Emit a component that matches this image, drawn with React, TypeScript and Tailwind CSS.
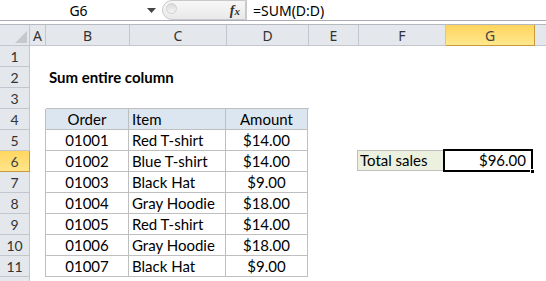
import React from 'react';

// Column widths of the sheet: row header, A..G, then the cut-off H
const cols = [
  { key: 'A', w: 'w-[16px]' },
  { key: 'B', w: 'w-[84px]' },
  { key: 'C', w: 'w-[97px]' },
  { key: 'D', w: 'w-[82px]' },
  { key: 'E', w: 'w-[50px]' },
  { key: 'F', w: 'w-[87px]' },
  { key: 'G', w: 'w-[89px]' },
];

const orders = [
  ['01001', 'Red T-shirt', '$14.00'],
  ['01002', 'Blue T-shirt', '$14.00'],
  ['01003', 'Black Hat', '$9.00'],
  ['01004', 'Gray Hoodie', '$18.00'],
  ['01005', 'Red T-shirt', '$14.00'],
  ['01006', 'Gray Hoodie', '$18.00'],
  ['01007', 'Black Hat', '$9.00'],
];

const font = "font-['Lato','Noto_Sans',sans-serif]";

function RowHeader({ n, active }: { n: number; active?: boolean }) {
  return (
    <div
      className={
        'w-[30px] shrink-0 h-full flex items-center justify-center text-[14px] text-[#333] border-b border-r ' +
        (active
          ? 'bg-gradient-to-b from-[#ffd660] to-[#ffe58a] border-[#c99a3c] text-[#444]'
          : 'bg-[#e4e7ec] border-[#c3c7cd]')
      }
    >
      {n}
    </div>
  );
}

function Cell({
  w,
  className = '',
  children,
}: {
  w: string;
  className?: string;
  children?: React.ReactNode;
}) {
  return <div className={`${w} shrink-0 h-full flex items-center text-[15px] ${className}`}>{children}</div>;
}

function FormulaBar() {
  return (
    <div className="h-[21px] flex border-b border-[#a9adb3] bg-white text-[14px] font-['Noto_Sans',sans-serif] text-black">
      <div className="w-[162px] shrink-0 flex items-center">
        <span className="flex-1 text-center pl-[10px]">G6</span>
        <svg width="9" height="5" viewBox="0 0 9 5" className="mr-[6px]">
          <path d="M0 0 L9 0 L4.5 5 Z" fill="#444" />
        </svg>
      </div>
      <div className="w-[84px] shrink-0 relative flex items-center justify-end rounded-l-full border border-[#c7c9cc] bg-gradient-to-b from-[#f7f7f7] to-[#e9e9e9]">
        <div className="absolute left-[3px] top-[2px] w-[11px] h-[11px] rounded-full bg-gradient-to-b from-[#dcdcdc] to-[#f4f4f4] border border-[#d0d0d0]" />
        <span className="pr-[5px] italic font-bold font-['Liberation_Serif',serif] text-[14px] text-[#333]">
          f<span className="text-[11px]">x</span>
        </span>
      </div>
      <div className="flex-1 flex items-center pl-[6px] border-l border-[#c7c9cc]">=SUM(D:D)</div>
    </div>
  );
}

function ColumnHeaders() {
  return (
    <div className="h-[22px] flex border-t border-[#b5b9bf] text-[14px] text-[#333] font-['Noto_Sans',sans-serif]">
      <div className="w-[30px] shrink-0 h-full bg-[#e4e7ec] border-b border-r border-[#c3c7cd] flex items-end justify-end p-[2px]">
        <svg width="12" height="12" viewBox="0 0 12 12">
          <path d="M12 0 L12 12 L0 12 Z" fill="#c5c9ce" />
        </svg>
      </div>
      {cols.map((c) => (
        <div
          key={c.key}
          className={
            `${c.w} shrink-0 h-full flex items-center justify-center border-b border-r ` +
            (c.key === 'G'
              ? 'bg-gradient-to-b from-[#ffd45c] to-[#ffe88c] border-[#c99a3c] text-[#444]'
              : 'bg-[#e4e7ec] border-[#c3c7cd]')
          }
        >
          {c.key}
        </div>
      ))}
      <div className="flex-1 h-full bg-[#e4e7ec] border-b border-[#c3c7cd]" />
    </div>
  );
}

export default function App() {
  const tb = 'border-[#bfbfbf]';
  return (
    <div className={`w-[546px] h-[281px] bg-white overflow-hidden ${font}`}>
      <FormulaBar />
      <div className="h-[3px] bg-white" />
      <ColumnHeaders />

      {/* row 1 */}
      <div className="h-[21px] flex">
        <RowHeader n={1} />
      </div>
      {/* row 2 */}
      <div className="h-[21px] flex">
        <RowHeader n={2} />
        <Cell w="w-[16px]" />
        <Cell w="w-[200px]" className="pl-[3px] font-bold text-black whitespace-nowrap">
          Sum entire column
        </Cell>
      </div>
      {/* row 3 */}
      <div className="h-[21px] flex">
        <RowHeader n={3} />
        <Cell w="w-[16px]" />
        <Cell w="w-[84px]" className={`border-b ${tb}`} />
        <Cell w="w-[97px]" className={`border-b ${tb}`} />
        <Cell w="w-[82px]" className={`border-b ${tb}`} />
      </div>
      {/* row 4: table header */}
      <div className="h-[21px] flex">
        <RowHeader n={4} />
        <Cell w="w-[16px]" className={`border-r ${tb}`} />
        <Cell w="w-[83px]" className={`justify-center bg-[#dce6f1] border-b border-r ${tb}`}>
          Order
        </Cell>
        <Cell w="w-[97px]" className={`pl-[3px] bg-[#dce6f1] border-b border-r ${tb}`}>
          Item
        </Cell>
        <Cell w="w-[82px]" className={`justify-center bg-[#dce6f1] border-b border-r ${tb}`}>
          Amount
        </Cell>
      </div>
      {orders.map(([id, item, amt], i) => {
        const n = i + 5;
        return (
          <div key={id} className="h-[21px] flex">
            <RowHeader n={n} active={n === 6} />
            <Cell w="w-[16px]" className={`border-r ${tb}`} />
            <Cell w="w-[83px]" className={`justify-center border-b border-r ${tb}`}>
              {id}
            </Cell>
            <Cell w="w-[97px]" className={`pl-[3px] border-b border-r ${tb} whitespace-nowrap`}>
              {item}
            </Cell>
            <Cell w="w-[82px]" className={`justify-center border-b border-r ${tb}`}>
              {amt}
            </Cell>
            {n === 6 && (
              <>
                <Cell w="w-[49px]" />
                <Cell w="w-[87px]" className="pl-[2px] bg-[#ebf1de] border border-[#bfbfbf] -mt-px">
                  Total sales
                </Cell>
                <div className="w-[90px] shrink-0 h-[23px] -mt-[2px] -ml-px relative border-2 border-black flex items-center justify-end pr-[5px] text-[15px] bg-white">
                  $96.00
                  <div className="absolute -right-[4px] -bottom-[4px] w-[5px] h-[5px] bg-black border border-white" />
                </div>
              </>
            )}
          </div>
        );
      })}
      <div className="h-[4px] flex">
        <div className="w-[30px] h-full bg-[#e4e7ec] border-r border-[#c3c7cd]" />
      </div>
    </div>
  );
}
